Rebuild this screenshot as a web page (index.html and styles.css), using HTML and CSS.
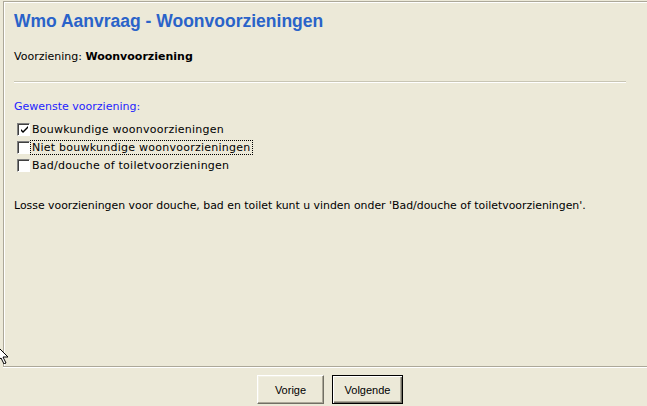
FILE: index.html
```html
<!DOCTYPE html>
<html lang="nl">
<head>
<meta charset="utf-8">
<title>Wmo Aanvraag - Woonvoorzieningen</title>
<link rel="stylesheet" href="styles.css">
</head>
<body>
<div class="frame">
  <h1 class="title">Wmo Aanvraag - Woonvoorzieningen</h1>
  <p class="field">Voorziening: <b>Woonvoorziening</b></p>
  <div class="rule"></div>
  <p class="legend">Gewenste voorziening:</p>
  <ul class="options">
    <li class="option"><span class="box checked"><svg viewBox="0 0 7 7" width="7" height="7"><path d="M0 3 L2 5 L7 0 L7 2 L2 7 L0 5 Z" fill="#000"/></svg></span><span class="label">Bouwkundige woonvoorzieningen</span></li>
    <li class="option"><span class="box"></span><span class="label focus">Niet bouwkundige woonvoorzieningen</span></li>
    <li class="option"><span class="box"></span><span class="label">Bad/douche of toiletvoorzieningen</span></li>
  </ul>
  <p class="note">Losse voorzieningen voor douche, bad en toilet kunt u vinden onder 'Bad/douche of toiletvoorzieningen'.</p>
</div>
<div class="buttons">
  <button class="btn">Vorige</button>
  <button class="btn default">Volgende</button>
</div>
<svg class="cursor" width="12" height="20" viewBox="0 0 12 20"><path d="M-4 1 L8 13 L3 13 L6 19 L4 20 L1 14 L-4 18 Z" fill="#fff" stroke="#000" stroke-width="1"/></svg>
</body>
</html>
```
FILE: styles.css
```css
html, body {
  margin: 0;
  padding: 0;
  background: #ece9d8;
  overflow: hidden;
  width: 647px;
  height: 406px;
}
body {
  position: relative;
  font-family: "DejaVu Sans", Verdana, sans-serif;
  font-size: 11px;
  color: #000;
}
.frame {
  box-sizing: border-box;
  margin: 1px 0 0 3px;
  width: 660px;
  height: 366px;
  border: 1px solid #aca899;
  box-shadow: inset 1px 1px 0 #fff, 0 1px 0 #fff;
  padding: 9px 0 0 10px;
}
.title {
  margin: 0;
  font-family: "Liberation Sans", Arial, sans-serif;
  font-size: 17.5px;
  font-weight: bold;
  color: #2a63c9;
  line-height: 21px;
}
.field {
  margin: 18px 0 0 0;
  line-height: 14px;
}
.field b {
  font-weight: bold;
}
.rule {
  margin: 17px 0 0 0;
  width: 612px;
  height: 1px;
  background: #c8c5b4;
  border-bottom: 1px solid #fff;
}
.legend {
  margin: 17px 0 0 0;
  line-height: 14px;
  color: #1e1eff;
}
.options {
  list-style: none;
  margin: 6px 0 0 3px;
  padding: 0;
}
.option {
  display: flex;
  align-items: center;
  height: 18px;
}
.box {
  box-sizing: border-box;
  width: 13px;
  height: 13px;
  border: 1px solid;
  border-color: #808080 #fff #fff #808080;
  background: #fff;
  box-shadow: inset 1px 1px 0 #404040;
  display: flex;
  align-items: center;
  justify-content: center;
  margin-right: 0;
}
.box svg {
  display: block;
  margin: 1px 0 0 1px;
}
.label {
  line-height: 13px;
  padding: 0 1px;
  border: 1px dotted transparent;
  letter-spacing: 0.25px;
}
.label.focus {
  border-color: #000;
}
.note {
  margin: 25px 0 0 0;
  font-size: 10.9px;
  line-height: 13px;
}
.buttons {
  display: flex;
  justify-content: center;
  gap: 8px;
  padding: 8px 0 0 13px;
}
.btn {
  box-sizing: border-box;
  height: 29px;
  width: 67px;
  font-family: "Liberation Sans", Tahoma, sans-serif;
  font-size: 11px;
  color: #000;
  background: #ece9d8;
  border: 1px solid;
  border-color: #fff #716f64 #716f64 #fff;
  box-shadow: inset -1px -1px 0 #aca899, inset 1px 1px 0 #f1efe2;
  padding: 0;
}
.btn.default {
  width: 71px;
  border: 1px solid #000;
  box-shadow: inset 1px 1px 0 #fff, inset -1px -1px 0 #716f64, inset -2px -2px 0 #aca899;
}
.cursor {
  position: absolute;
  left: 0;
  top: 344px;
}
```
